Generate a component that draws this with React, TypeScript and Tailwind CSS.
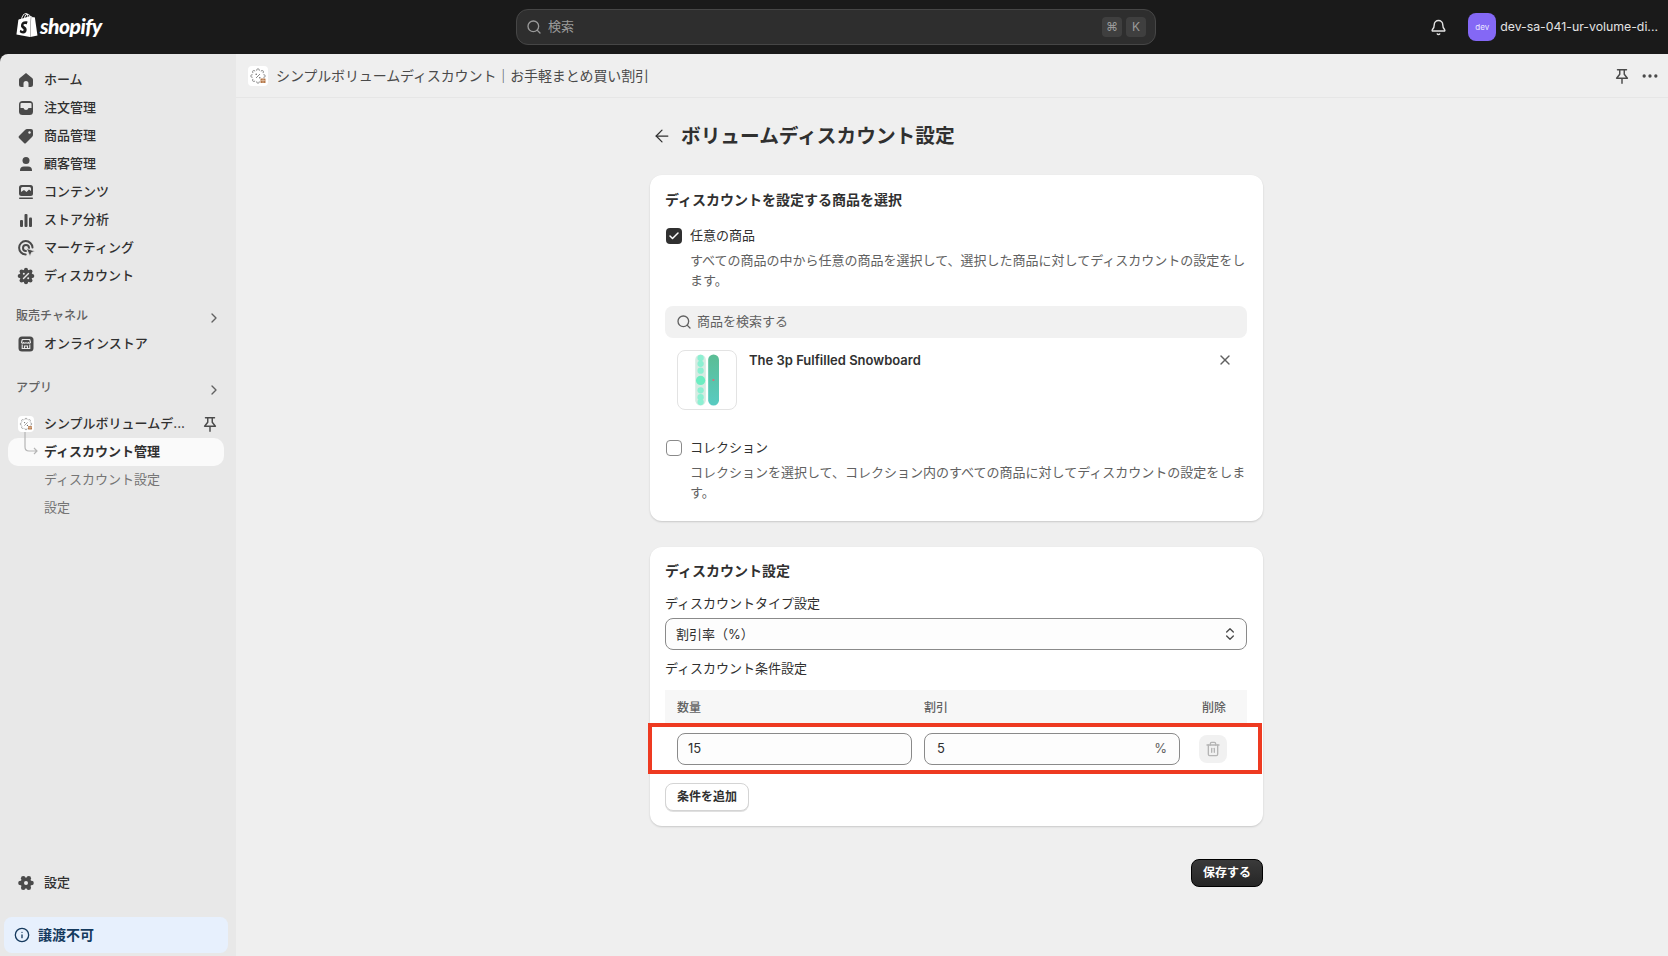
import { ArrowLeft, Bell, Check, ChevronRight, ChevronsUpDown, Ellipsis, Info, Search, Trash2, X } from "lucide-react";
import { SiShopify } from "react-icons/si";

const lobes = (count: number, radius: number) =>
  Array.from({ length: count }, (_, i) => {
    const angle = (i / count) * Math.PI * 2;
    return { cx: 10 + Math.cos(angle) * radius, cy: 10 + Math.sin(angle) * radius };
  });

function PinIcon({ className }: { className: string }) {
  return (
    <svg viewBox="0 0 20 20" className={`fill-none stroke-current ${className}`} strokeWidth="1.600" strokeLinecap="round" strokeLinejoin="round">
      <path d="M5 3h10M7.500 3v5L4 12.500h12L12.500 8V3M10 12.500V18" />
    </svg>
  );
}

function HomeIcon() {
  return (
    <svg viewBox="0 0 20 20" className="h-5 w-5 fill-[#4a4a4a]">
      <path d="M10 3 3.600 8.200Q3 8.800 3 10v4.500Q3 17 5.500 17h2V13.500Q7.500 11 10 11t2.500 2.500V17h2q2.500 0 2.500-2.500V10q0-1.200-.6-1.800Z" />
    </svg>
  );
}

function OrdersIcon() {
  return (
    <svg viewBox="0 0 20 20" className="h-5 w-5">
      <rect x="3" y="3" width="14" height="14" rx="3.500" fill="#4a4a4a" />
      <path d="M5.500 5h9q1 0 1 1v4h-3q-.6 2-2.500 2t-2.500-2h-3V6q0-1 1-1Z" fill="#e8e8e8" />
    </svg>
  );
}

function TagIcon() {
  return (
    <svg viewBox="0 0 20 20" className="h-5 w-5">
      <path d="M11 3h4q2 0 2 2v4q0 1-1 2l-6 6q-1 1-2 0l-5-5q-1-1 0-2l6-6q1-1 2-1Z" fill="#4a4a4a" />
      <circle cx="13.500" cy="6.500" r="1.200" fill="#e8e8e8" />
    </svg>
  );
}

function PersonIcon() {
  return (
    <svg viewBox="0 0 20 20" className="h-5 w-5 fill-[#4a4a4a]">
      <circle cx="10" cy="6.500" r="3.500" />
      <path d="M4 16.500q0-4 4-4h4q4 0 4 4v.5H4Z" />
    </svg>
  );
}

function ContentIcon() {
  return (
    <svg viewBox="0 0 20 20" className="h-5 w-5">
      <rect x="3" y="3" width="14" height="11" rx="2.500" fill="#4a4a4a" />
      <path d="M5 6.500q0-1.500 1.500-1.500h7Q15 5 15 6.500V9l-2-1.500L10.500 10 8 8l-3 2Z" fill="#e8e8e8" />
      <rect x="3" y="15.500" width="14" height="1.500" rx=".7" fill="#4a4a4a" />
    </svg>
  );
}

function ChartIcon() {
  return (
    <svg viewBox="0 0 20 20" className="h-5 w-5 fill-[#4a4a4a]">
      <rect x="4" y="10" width="3" height="7" rx="1" />
      <rect x="8.500" y="4" width="3" height="13" rx="1" />
      <rect x="13" y="7.500" width="3" height="9.500" rx="1" />
    </svg>
  );
}

function MarketingIcon() {
  return (
    <svg viewBox="0 0 20 20" className="h-5 w-5">
      <path d="M16.500 9.500a6.700 6.700 0 1 0-6.800 7" fill="none" stroke="#4a4a4a" strokeWidth="2" strokeLinecap="round" />
      <path d="M13 10a3 3 0 1 0-3 3" fill="none" stroke="#4a4a4a" strokeWidth="2" strokeLinecap="round" />
      <path d="m10.500 10.500 8.500 2.700-3.500 1.300-1.500 3.800Z" fill="#4a4a4a" stroke="#e8e8e8" strokeWidth=".7" />
    </svg>
  );
}

function DiscountIcon() {
  return (
    <svg viewBox="0 0 20 20" className="h-5 w-5">
      <circle cx="10" cy="10" r="6.500" fill="#4a4a4a" />
      {lobes(8, 6.300).map((p, i) => (
        <circle key={i} cx={p.cx} cy={p.cy} r="2" fill="#4a4a4a" />
      ))}
      <path d="m7.500 12.500 5-5" stroke="#e8e8e8" strokeWidth="1.400" strokeLinecap="round" />
      <circle cx="7.800" cy="7.800" r="1" fill="#e8e8e8" />
      <circle cx="12.200" cy="12.200" r="1" fill="#e8e8e8" />
    </svg>
  );
}

function StoreIcon() {
  return (
    <svg viewBox="0 0 20 20" className="h-5 w-5">
      <rect x="2.500" y="2.500" width="15" height="15" rx="3.500" fill="#4a4a4a" />
      <path d="M5.500 8.500 6.300 5.500h7.400l.8 3q-.8 1.400-2.200 0-1.100 1.400-2.300 0-1.200 1.400-2.300 0-1.400 1.400-2.200 0Z" fill="none" stroke="#e8e8e8" strokeWidth="1.100" strokeLinejoin="round" />
      <path d="M6.200 10.500v4h7.600v-4M8.500 14.500v-2.500h3v2.500" fill="none" stroke="#e8e8e8" strokeWidth="1.100" />
    </svg>
  );
}

function GearIcon() {
  return (
    <svg viewBox="0 0 20 20" className="h-5 w-5">
      <circle cx="10" cy="10" r="5.500" fill="#4a4a4a" />
      {lobes(6, 5.500).map((p, i) => (
        <circle key={i} cx={p.cx} cy={p.cy} r="2.300" fill="#4a4a4a" />
      ))}
      <circle cx="10" cy="10" r="2" fill="#e8e8e8" />
    </svg>
  );
}

function AppIcon({ size }: { size: string }) {
  return (
    <span className={`flex items-center justify-center rounded-[4px] bg-white ${size}`}>
      <svg viewBox="0 0 20 20" className="h-full w-full">
        {lobes(8, 5.800).map((p, i) => (
          <circle key={i} cx={p.cx} cy={p.cy} r="1.400" fill="#fff" stroke="#6d6d6d" strokeWidth=".7" />
        ))}
        <circle cx="10" cy="10" r="5.600" fill="#fff" />
        <path d="m8 12 4-4" stroke="#6d6d6d" strokeWidth=".8" />
        <circle cx="8.200" cy="8.200" r=".8" fill="#6d6d6d" />
        <circle cx="11.800" cy="11.800" r=".8" fill="#6d6d6d" />
        <rect x="12.500" y="12.500" width="5" height="4.500" rx=".6" fill="#b5784a" />
        <path d="M12.500 14.500h5M15 12.500v4.500" stroke="#f1dcc8" strokeWidth=".5" />
      </svg>
    </span>
  );
}

function SnowboardThumb() {
  const dots = [7, 13, 20, 40, 47, 52];
  return (
    <svg viewBox="0 0 59 59" className="h-full w-full">
      <defs>
        <linearGradient id="board" x1="0" y1="0" x2="0" y2="1">
          <stop offset="0" stopColor="#5bbd94" />
          <stop offset="1" stopColor="#58cbc2" />
        </linearGradient>
      </defs>
      <rect x="17.500" y="3.500" width="10.800" height="52" rx="5.400" fill="#d5ebe2" />
      {dots.map((cy) => (
        <circle key={cy} cx="23" cy={cy} r="3.200" fill="#8cf0d2" />
      ))}
      <circle cx="23" cy="30" r="4.700" fill="#6cedc1" />
      <rect x="30.700" y="3.500" width="11" height="52" rx="5.500" fill="url(#board)" />
      <circle cx="36" cy="29.500" r="1.100" fill="#e2697a" />
    </svg>
  );
}

const mainNav = [
  { label: "ホーム", icon: <HomeIcon /> },
  { label: "注文管理", icon: <OrdersIcon /> },
  { label: "商品管理", icon: <TagIcon /> },
  { label: "顧客管理", icon: <PersonIcon /> },
  { label: "コンテンツ", icon: <ContentIcon /> },
  { label: "ストア分析", icon: <ChartIcon /> },
  { label: "マーケティング", icon: <MarketingIcon /> },
  { label: "ディスカウント", icon: <DiscountIcon /> },
];

function NavRow({ icon, label }: { icon: React.ReactNode; label: string }) {
  return (
    <div className="flex h-7 items-center gap-2 pl-4 text-[13px] font-medium text-[#303030]">
      {icon}
      <span>{label}</span>
    </div>
  );
}

function SectionRow({ label, className }: { label: string; className: string }) {
  return (
    <div className={`flex h-7 items-center justify-between pl-4 pr-[14px] ${className}`}>
      <span className="text-xs font-medium text-[#616161]">{label}</span>
      <ChevronRight className="mt-1 h-4 w-4 text-[#616161]" />
    </div>
  );
}

function Sidebar() {
  return (
    <aside className="flex w-[236px] shrink-0 flex-col rounded-tl-lg bg-[#e8e8e8] pt-3">
      {mainNav.map((item) => (
        <NavRow key={item.label} icon={item.icon} label={item.label} />
      ))}

      <SectionRow label="販売チャネル" className="mt-3" />
      <NavRow icon={<StoreIcon />} label="オンラインストア" />

      <SectionRow label="アプリ" className="mt-4" />
      <div className="mt-2 flex h-7 items-center pl-[18px] pr-[17px] text-[13px] font-medium text-[#303030]">
        <AppIcon size="h-4 w-4" />
        <span className="ml-[10px] flex-1">シンプルボリュームデ...</span>
        <PinIcon className="h-[18px] w-[18px] text-[#4a4a4a]" />
      </div>
      <div className="relative ml-2 mr-3 flex h-7 items-center rounded-[10px] bg-[#fafafa] pl-9 text-[13px] font-semibold text-[#303030]">
        <svg viewBox="0 0 16 24" className="absolute left-[16px] top-[-6px] h-6 w-4 fill-none stroke-[#b5b5b5]">
          <path d="M1 0v15q0 4 4 4h8M10 16l3 3-3 3" strokeWidth="1.200" />
        </svg>
        ディスカウント管理
      </div>
      <div className="flex h-7 items-center pl-[44px] text-[13px] text-[#757575]">ディスカウント設定</div>
      <div className="flex h-7 items-center pl-[44px] text-[13px] text-[#757575]">設定</div>

      <div className="mt-auto">
        <NavRow icon={<GearIcon />} label="設定" />
      </div>
      <div className="mb-[3px] ml-1 mr-2 mt-5 flex h-9 items-center gap-2 rounded-lg bg-[#e7f0fd] pl-[10px] text-sm font-semibold text-[#153a5e]">
        <Info className="h-4 w-4" />
        譲渡不可
      </div>
    </aside>
  );
}

function TopBar() {
  return (
    <header className="flex h-[54px] shrink-0 items-center bg-[#1a1a1a]">
      <div className="-mt-1 flex w-[516px] items-center gap-[1px] pl-[15px] text-white">
        <SiShopify className="h-[26px] w-[24px]" />
        <span className="font-[family-name:Lato,sans-serif] text-[21px] font-black italic leading-none tracking-[-0.5px]">shopify</span>
      </div>

      <div className="flex h-9 w-[640px] items-center rounded-xl border border-[#464646] bg-[#2e2e2e] pl-[9px] pr-[9px] text-[13px] text-[#9a9a9a]">
        <Search className="h-4 w-4" />
        <span className="ml-[6px] flex-1">検索</span>
        <span className="flex h-5 w-5 items-center justify-center rounded bg-[#3f3f3f] text-xs">⌘</span>
        <span className="ml-1 flex h-5 w-5 items-center justify-center rounded bg-[#3f3f3f] text-xs">K</span>
      </div>

      <div className="flex flex-1 items-center justify-end pr-[10px]">
        <Bell className="h-[17px] w-[17px] text-[#e3e3e3]" />
        <span className="ml-[21px] flex h-7 w-7 items-center justify-center rounded-lg bg-[#8468f5] text-[8px] text-[#ece8ff]">dev</span>
        <span className="ml-1 text-[12.300px] text-[#e3e3e3]">dev-sa-041-ur-volume-di...</span>
      </div>
    </header>
  );
}

function OptionBlock({ checked, label, desc }: { checked: boolean; label: string; desc: string }) {
  return (
    <div className="text-[13px]">
      <div className="flex h-5 items-center">
        {checked ? (
          <span className="ml-px flex h-4 w-4 items-center justify-center rounded bg-[#303030] text-white">
            <Check className="h-3 w-3" strokeWidth={3} />
          </span>
        ) : (
          <span className="ml-px h-4 w-4 rounded border border-[#8a8a8a] bg-white" />
        )}
        <span className="ml-2 text-[#303030]">{label}</span>
      </div>
      <p className="mt-1 pl-[25px] pr-[1px] leading-5 text-[#616161]">{desc}</p>
    </div>
  );
}

function SettingsPage() {
  return (
    <div className="ml-[414px] flex w-[613px] flex-col">
      <div className="mt-6 flex h-7 items-center gap-[9px] pl-[2px]">
        <ArrowLeft className="h-5 w-5 text-[#303030]" strokeWidth={1.5} />
        <h1 className="pt-px text-[19.700px] font-bold text-[#303030]">ボリュームディスカウント設定</h1>
      </div>

      <section className="mt-[25px] rounded-xl bg-white pb-[19px] pl-[15px] pr-4 pt-[15px] shadow-[0_1px_2px_rgba(0,0,0,0.16)]">
        <h2 className="text-sm font-semibold leading-5 text-[#303030]">ディスカウントを設定する商品を選択</h2>
        <div className="mt-4">
          <OptionBlock
            checked
            label="任意の商品"
            desc="すべての商品の中から任意の商品を選択して、選択した商品に対してディスカウントの設定をします。"
          />
        </div>
        <div className="mt-4 flex h-8 items-center rounded-lg bg-[#f1f1f1] pl-[11px] text-[13px] text-[#616161]">
          <Search className="h-4 w-4 text-[#616161]" />
          <span className="ml-[5px]">商品を検索する</span>
        </div>
        <div className="mt-3 flex pl-3 pr-[14px]">
          <div className="h-[60px] w-[60px] rounded-lg border border-[#e3e3e3] bg-white">
            <SnowboardThumb />
          </div>
          <span className="ml-3 flex-1 text-[13px] font-semibold leading-5 text-[#303030]">The 3p Fulfilled Snowboard</span>
          <X className="mt-[2px] h-4 w-4 text-[#616161]" />
        </div>
        <div className="mt-[28px]">
          <OptionBlock
            checked={false}
            label="コレクション"
            desc="コレクションを選択して、コレクション内のすべての商品に対してディスカウントの設定をします。"
          />
        </div>
      </section>

      <section className="mt-[26px] rounded-xl bg-white pb-[15px] pl-[15px] pr-4 pt-[14px] text-[13px] text-[#303030] shadow-[0_1px_2px_rgba(0,0,0,0.16)]">
        <h2 className="text-sm font-semibold leading-5">ディスカウント設定</h2>
        <div className="mt-3 leading-5">ディスカウントタイプ設定</div>
        <div className="mt-[5px] flex h-8 items-center justify-between rounded-lg border border-[#8a8a8a] bg-[#fdfdfd] pl-[10px] pr-2">
          <span className="pt-px">割引率（%）</span>
          <ChevronsUpDown className="h-4 w-4 text-[#4a4a4a]" />
        </div>
        <div className="mt-2 leading-5">ディスカウント条件設定</div>

        <div className="mt-3 flex h-[33px] items-center bg-[#f7f7f7] pl-3 pt-[2px] text-xs font-medium text-[#616161]">
          <span className="w-[247px]">数量</span>
          <span className="w-[278px]">割引</span>
          <span>削除</span>
        </div>
        <div className="relative flex h-[51px] items-center pl-3">
          <div className="flex h-8 w-[235px] items-center rounded-lg border border-[#8a8a8a] bg-[#fdfdfd] pl-[10px] pt-px">15</div>
          <div className="ml-3 flex h-8 w-[256px] items-center justify-between rounded-lg border border-[#8a8a8a] bg-[#fdfdfd] pl-3 pr-[12px] pt-px">
            <span>5</span>
            <span className="text-[#616161]">%</span>
          </div>
          <div className="ml-[19px] flex h-7 w-7 items-center justify-center rounded-lg bg-[#f1f1f1]">
            <Trash2 className="h-4 w-4 text-[#b5b5b5]" />
          </div>
          <div className="absolute bottom-0 left-[-17px] right-[-15px] top-0 border-4 border-[#ee3a21]" />
        </div>
        <button className="mt-[9px] flex h-7 w-[84px] items-center justify-center rounded-lg border border-[#d4d4d4] bg-white text-xs font-semibold shadow-[0_1px_0_rgba(0,0,0,0.12)]">
          条件を追加
        </button>
      </section>

      <button className="mt-[33px] flex h-7 w-[72px] items-center justify-center self-end rounded-lg border border-black bg-[linear-gradient(#3a3a3a,#262626)] text-xs font-semibold text-white">
        保存する
      </button>
    </div>
  );
}

export default function App() {
  return (
    <div className="flex h-[956px] w-[1668px] flex-col overflow-hidden bg-[#1a1a1a] font-[family-name:Inter,'Noto_Sans_CJK_JP',sans-serif]">
      <TopBar />
      <div className="flex min-h-0 flex-1">
        <Sidebar />
        <main className="flex-1 bg-[#efefef]">
          <div className="flex h-11 items-center justify-between border-b border-[#e6e6e6] pl-3 pr-2">
            <div className="flex items-center gap-2">
              <AppIcon size="h-5 w-5" />
              <span className="text-sm tracking-[-0.12px] text-[#4a4a4a]">シンプルボリュームディスカウント｜お手軽まとめ買い割引</span>
            </div>
            <div className="flex items-center gap-[9px] text-[#4a4a4a]">
              <PinIcon className="h-[18px] w-[18px]" />
              <Ellipsis className="h-5 w-5" />
            </div>
          </div>
          <SettingsPage />
        </main>
      </div>
    </div>
  );
}
